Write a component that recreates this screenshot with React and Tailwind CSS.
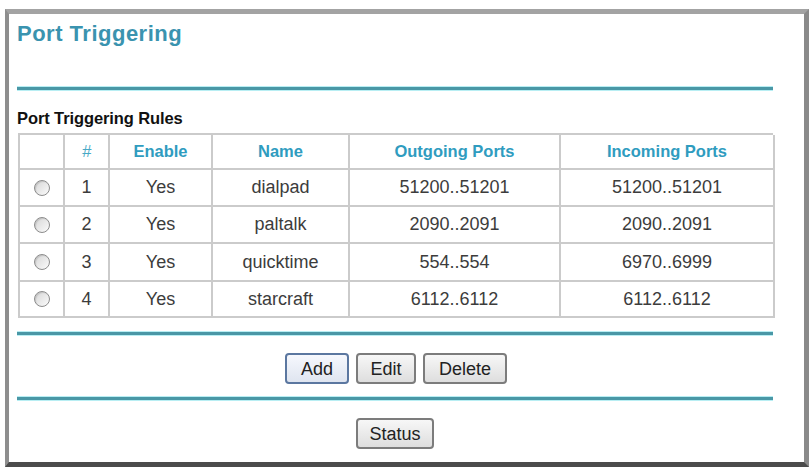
import React from "react";

const rows = [
  ["1", "Yes", "dialpad", "51200..51201", "51200..51201"],
  ["2", "Yes", "paltalk", "2090..2091", "2090..2091"],
  ["3", "Yes", "quicktime", "554..554", "6970..6999"],
  ["4", "Yes", "starcraft", "6112..6112", "6112..6112"],
];

const rowHeights = ["h-[37px]", "h-[37px]", "h-[38px]", "h-[36px]"];

function Rule({ className = "" }) {
  return (
    <div
      className={
        "h-[3px] bg-[#4a97a6] shadow-[0_1px_0_#b8eef3,0_-1px_0_#b8eef3] " +
        className
      }
    />
  );
}

function Radio() {
  return (
    <span className="block w-[16px] h-[16px] rounded-full border border-[#8c8c8c] bg-gradient-to-br from-[#d6d6d6] to-[#fbfbfb] shadow-[inset_1px_1px_1px_rgba(0,0,0,0.12)]" />
  );
}

function Btn({ children, primary = false, w }) {
  return (
    <button
      className={
        "h-[31px] rounded-[4px] border-2 text-[18px] leading-none text-[#222] flex items-center justify-center " +
        (primary
          ? "border-[#5b77a0] bg-gradient-to-b from-[#f6f8fd] to-[#dfe5f0] "
          : "border-[#7c7c7c] bg-gradient-to-b from-[#f7f7f7] to-[#dedede] ") +
        w
      }
    >
      {children}
    </button>
  );
}

export default function App() {
  const font = { fontFamily: '"Liberation Sans", Arial, sans-serif' };
  const cell =
    "flex items-center justify-center border-r-2 border-b-2 border-[#cbcbcb]";
  return (
    <div className="w-[812px] h-[468px] bg-white pt-[9px] pl-[5px]" style={font}>
      <div className="w-[804px] h-[458px] border-t-[5px] border-l-[4px] border-r-[5px] border-b-[5px] border-t-[#a3a3a3] border-l-[#8e8e8e] border-r-[#8a8a8a] border-b-[#4b4b4b] pl-[8px] pr-[31px]">
        <div className="pt-[6px] text-[22px] leading-[28px] font-bold tracking-[0.5px] text-[#3a93af]">
          Port Triggering
        </div>
        <Rule className="mt-[39px]" />
        <div className="mt-[18px] text-[16.5px] leading-[20px] font-bold text-[#111] tracking-[-0.1px]">
          Port Triggering Rules
        </div>
        <div className="mt-[5px] ml-px grid grid-cols-[45px_45px_103px_137px_211px_214px] w-[755px] border-l-2 border-t-2 border-[#cbcbcb]">
          {["", "#", "Enable", "Name", "Outgoing Ports", "Incoming Ports"].map(
            (h, i) => (
              <div
                key={i}
                className={
                  cell +
                  " h-[35px] text-[16.5px] font-bold text-[#2f9cbf] " +
                  (i === 1 ? "font-normal italic text-[#48a9c6]" : "")
                }
              >
                {h}
              </div>
            )
          )}
          {rows.map((r, ri) => (
            <React.Fragment key={ri}>
              <div className={cell + " " + rowHeights[ri]}>
                <Radio />
              </div>
              {r.map((v, ci) => (
                <div
                  key={ci}
                  className={
                    cell + " " + rowHeights[ri] + " text-[18px] text-[#3c3c3c]"
                  }
                >
                  {v}
                </div>
              ))}
            </React.Fragment>
          ))}
        </div>
        <Rule className="mt-[14px]" />
        <div className="mt-[18px] flex justify-center gap-[7px] pl-[2px]">
          <Btn primary w="w-[64px]">Add</Btn>
          <Btn w="w-[60px]">Edit</Btn>
          <Btn w="w-[84px]">Delete</Btn>
        </div>
        <Rule className="mt-[13px]" />
        <div className="mt-[18px] flex justify-center">
          <Btn w="w-[78px]">Status</Btn>
        </div>
      </div>
    </div>
  );
}
